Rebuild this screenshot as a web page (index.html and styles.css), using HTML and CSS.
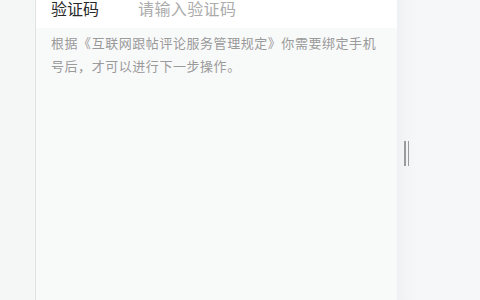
FILE: index.html
```html
<!DOCTYPE html>
<html lang="zh">
<head>
<meta charset="utf-8">
<link rel="stylesheet" href="styles.css">
</head>
<body>
<div class="page">
  <div class="left"></div>
  <div class="panel">
    <div class="field">
      <span class="label">验证码</span>
      <span class="placeholder">请输入验证码</span>
    </div>
    <div class="notice">根据《互联网跟帖评论服务管理规定》你需要绑定手机号后，才可以进行下一步操作。</div>
  </div>
  <div class="right">
    <div class="handle"><i></i><i></i></div>
  </div>
</div>
</body>
</html>
```
FILE: styles.css
```css
html, body { margin: 0; padding: 0; }
body {
  width: 480px; height: 300px; overflow: hidden;
  font-family: "Noto Sans CJK SC", "Noto Sans", sans-serif;
}
.page { display: flex; height: 300px; }
.left {
  width: 35px; flex: none;
  background: #f5f7f7;
  border-right: 1px solid #e1e2e2;
}
.panel {
  width: 361px; flex: none;
  background: #f8f9f9;
  display: flex; flex-direction: column;
}
.field {
  height: 28px; background: #ffffff;
  display: flex; align-items: flex-start;
  padding-left: 15px;
  font-size: 16px; line-height: 17px;
}
.label { width: 87px; color: #2b2b2b; }
.placeholder { color: #ababab; letter-spacing: 0.4px; }
.notice {
  padding: 3px 14px 0 15px;
  font-size: 13px; line-height: 23px;
  color: #9a9a9a;
  text-spacing-trim: space-all;
  letter-spacing: 0.55px;
}
.right {
  flex: 1;
  background: linear-gradient(to right, #eff0f1 0, #f3f4f5 8px, #f6f7f8 20px, #f6f7f8 100%);
  padding: 141px 0 0 7px;
}
.handle { display: flex; gap: 2px; height: 25px; }
.handle i { display: block; width: 1.5px; height: 25px; background: #9b9b9b; }
```
